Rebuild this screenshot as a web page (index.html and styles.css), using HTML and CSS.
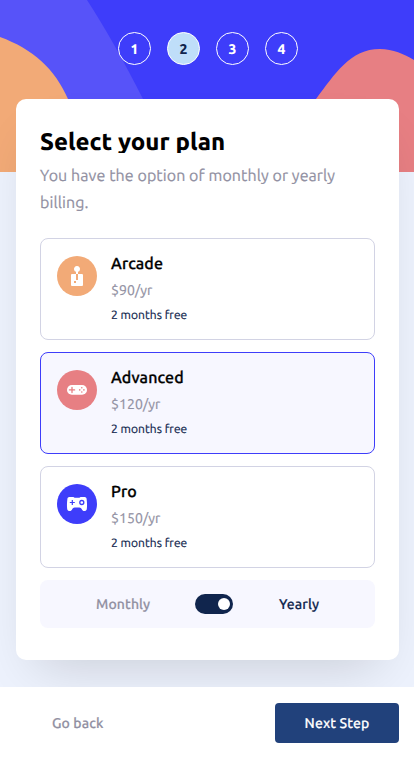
FILE: index.html
```
<!DOCTYPE html>
<html lang="en">
<head>
<meta charset="utf-8">
<meta name="viewport" content="width=device-width, initial-scale=1">
<title>Select your plan</title>
<link rel="stylesheet" href="styles.css">
</head>
<body>
<div class="page">
  <svg class="backdrop" viewBox="0 0 414 172" aria-hidden="true">
    <path fill="#3e3dfa" d="M0 0H414V172H0Z"/>
    <path fill="#5753f9" d="M0 0H87Q113 40 143 99L180 172H0Z"/>
    <path fill="#f2aa77" d="M0 37C33 49 55 69 68 99C78 122 84 148 84 172H0Z"/>
    <path fill="#e77f83" d="M260 172C285 148 300 121 316 99C335 74 350 49 380 49C393 49 404 54 414 60V172Z"/>
  </svg>
  <ol class="steps">
    <li>1</li><li class="current">2</li><li>3</li><li>4</li>
  </ol>
  <main class="card">
    <h1>Select your plan</h1>
    <p class="lead">You have the option of monthly or yearly billing.</p>
    <div class="plans">
      <div class="plan">
        <svg class="icon" viewBox="0 0 40 40"><circle cx="20" cy="20" r="20" fill="#f2aa77"/><path fill="#fff" d="M24.995 18.005h-3.998v5.998h-2v-5.998H15a1 1 0 0 0-1 1V29a1 1 0 0 0 1 1h9.995a1 1 0 0 0 1-1v-9.995a1 1 0 0 0-1-1Zm-5.997 8.996h-2v-1.999h2v2Zm2-11.175a2.999 2.999 0 1 0-2 0v2.18h2v-2.18Z"/></svg>
        <div class="info"><h2>Arcade</h2><p class="price">$90/yr</p><p class="bonus">2 months free</p></div>
      </div>
      <div class="plan selected">
        <svg class="icon" viewBox="0 0 40 40"><circle cx="20" cy="20" r="20" fill="#e77f83"/><rect x="10" y="15" width="20" height="9.8" rx="4.9" fill="#fff"/><path d="M15 17.3v5.2M12.4 19.9h5.2" stroke="#e77f83" stroke-width="1.3" stroke-linecap="round"/><g fill="#e77f83"><circle cx="24.8" cy="17.8" r=".8"/><circle cx="22.7" cy="19.9" r=".8"/><circle cx="26.9" cy="19.9" r=".8"/><circle cx="24.8" cy="22" r=".8"/></g></svg>
        <div class="info"><h2>Advanced</h2><p class="price">$120/yr</p><p class="bonus">2 months free</p></div>
      </div>
      <div class="plan">
        <svg class="icon" viewBox="0 0 40 40"><circle cx="20" cy="20" r="20" fill="#3e3dfa"/><path fill="#fff" d="M12.3 13h4.1l1.2.8h4.8l1.2-.8h4.1c1 0 1.7.7 1.9 1.8.5 3.6.6 7.2.2 10.2-.2 1.4-1.3 2-2.5 2-1.3 0-1.9-.8-2.5-1.8-.6-1-1.2-1.8-2.4-1.8h-4.8c-1.2 0-1.8.8-2.4 1.8-.6 1-1.2 1.8-2.5 1.8s-2.3-.6-2.5-2c-.4-3-.3-6.6.2-10.2.2-1.1.9-1.8 1.9-1.8Z"/><path d="M15.3 16v5M12.8 18.5h5" stroke="#3e3dfa" stroke-width="1.2"/><circle cx="24.8" cy="18.5" r="2" fill="none" stroke="#3e3dfa" stroke-width="1.3"/></svg>
        <div class="info"><h2>Pro</h2><p class="price">$150/yr</p><p class="bonus">2 months free</p></div>
      </div>
    </div>
    <div class="billing">
      <span class="monthly">Monthly</span>
      <span class="switch"></span>
      <span class="yearly">Yearly</span>
    </div>
  </main>
  <footer>
    <button class="back" type="button">Go back</button>
    <button class="next" type="button">Next Step</button>
  </footer>
</div>
</body>
</html>
```
FILE: styles.css
```
* { box-sizing: border-box; margin: 0; padding: 0; }
body { background: #edf2fd; font-family: Ubuntu, "Noto Sans", sans-serif; font-weight: 400; text-rendering: geometricPrecision; -webkit-text-stroke: .2px; }
.page { position: relative; width: 414px; height: 758px; overflow: hidden; display: flex; flex-direction: column; }
.backdrop { position: absolute; top: 0; left: 0; width: 414px; height: 172px; }
.steps { position: relative; display: flex; gap: 16px; padding: 32px 0 0 118px; height: 99px; list-style: none; }
.steps li { width: 33px; height: 33px; border: 1px solid #fff; border-radius: 50%; color: #fff; font-size: 14px; font-weight: 800; line-height: 32px; text-align: center; -webkit-text-stroke: 0; }
.steps .current { background: #bfdef9; color: #10254d; }
.card { position: relative; width: 383px; height: 561px; margin-left: 16px; padding: 31px 24px 0; background: #fff; border-radius: 10px; box-shadow: 0 25px 50px -20px rgba(0, 0, 0, .16); }
h1 { height: 23px; overflow: hidden; font-size: 24px; line-height: 24px; font-weight: 800; color: #000; white-space: nowrap; -webkit-text-stroke: 0; }
.lead { margin-top: 10px; font-size: 16px; line-height: 27px; color: #9190a2; letter-spacing: .09px; }
.plans { display: flex; flex-direction: column; gap: 12px; margin-top: 21px; }
.plan { display: flex; gap: 14px; height: 102px; padding: 15px 16px; border: 1px solid #d2d3e4; border-radius: 8px; }
.selected { background: #f7f7ff; border-color: #3e3dfa; }
.icon { width: 40px; height: 40px; margin-top: 2px; }
h2 { margin-top: 1px; font-size: 16px; line-height: 19px; font-weight: 500; color: #000; letter-spacing: .12px; -webkit-text-stroke: .3px; }
.price { margin-top: 6px; font-size: 14px; line-height: 20px; color: #9190a2; letter-spacing: .08px; }
.bonus { margin-top: 7px; font-size: 12px; line-height: 17px; color: #10254d; letter-spacing: .05px; }
.billing { display: flex; align-items: center; height: 48px; margin-top: 12px; padding-left: 56px; background: #f7f7ff; border-radius: 8px; font-size: 14px; font-weight: 500; letter-spacing: .12px; }
.monthly { width: 99px; color: #9190a2; }
.switch { display: flex; justify-content: flex-end; align-items: center; width: 38px; height: 20px; padding-right: 3px; background: #10254d; border-radius: 10px; }
.switch::after { content: ""; width: 12px; height: 12px; background: #fff; border-radius: 50%; }
.yearly { margin-left: 46px; color: #10254d; }
footer { position: relative; display: flex; justify-content: space-between; height: 71px; margin-top: 27px; padding: 16px 15px 0 52px; background: #fff; }
button { border: 0; background: none; font: 500 14px/40px Ubuntu, "Noto Sans", sans-serif; text-rendering: inherit; height: 40px; letter-spacing: .12px; }
.back { color: #9190a2; }
.next { width: 124px; background: #21417b; border-radius: 4px; color: #fff; }
```
